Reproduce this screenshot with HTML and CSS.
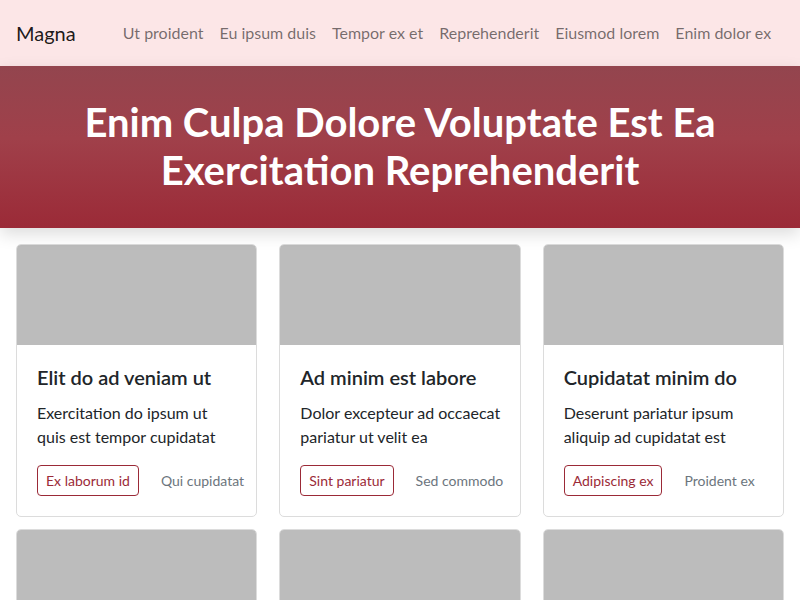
FILE: index.html
```html
<!DOCTYPE html>
<html lang="en">
<head>
<meta charset="utf-8">
<title>Magna</title>
<link rel="stylesheet" href="styles.css">
</head>
<body>
<nav class="navbar">
  <a class="brand" href="#">Magna</a>
  <ul class="nav-links">
    <li><a href="#">Ut proident</a></li>
    <li><a href="#">Eu ipsum duis</a></li>
    <li><a href="#">Tempor ex et</a></li>
    <li><a href="#">Reprehenderit</a></li>
    <li><a href="#">Eiusmod lorem</a></li>
    <li><a href="#">Enim dolor ex</a></li>
  </ul>
</nav>
<header class="hero">
  <h1 class="hero-title">Enim Culpa Dolore Voluptate Est Ea<br>Exercitation Reprehenderit</h1>
</header>
<main class="cards">
  <article class="card">
    <div class="card-img"></div>
    <div class="card-body">
      <h5 class="card-title">Elit do ad veniam ut</h5>
      <p class="card-text">Exercitation do ipsum ut<br>quis est tempor cupidatat</p>
      <div class="card-actions">
        <a class="btn-outline" href="#">Ex laborum id</a>
        <a class="btn-link" href="#">Qui cupidatat</a>
      </div>
    </div>
  </article>
  <article class="card">
    <div class="card-img"></div>
    <div class="card-body">
      <h5 class="card-title">Ad minim est labore</h5>
      <p class="card-text">Dolor excepteur ad occaecat<br>pariatur ut velit ea</p>
      <div class="card-actions">
        <a class="btn-outline" href="#">Sint pariatur</a>
        <a class="btn-link" href="#">Sed commodo</a>
      </div>
    </div>
  </article>
  <article class="card">
    <div class="card-img"></div>
    <div class="card-body">
      <h5 class="card-title">Cupidatat minim do</h5>
      <p class="card-text">Deserunt pariatur ipsum<br>aliquip ad cupidatat est</p>
      <div class="card-actions">
        <a class="btn-outline" href="#">Adipiscing ex</a>
        <a class="btn-link" href="#">Proident ex</a>
      </div>
    </div>
  </article>
  <article class="card">
    <div class="card-img"></div>
  </article>
  <article class="card">
    <div class="card-img"></div>
  </article>
  <article class="card">
    <div class="card-img"></div>
  </article>
</main>
</body>
</html>
```

FILE: styles.css
```css
* { box-sizing: border-box; }

html, body {
  margin: 0;
  padding: 0;
}

body {
  font-family: Lato, "Open Sans", sans-serif;
  font-size: 16px;
  line-height: 1.5;
  color: #212529;
  background: #ffffff;
}

a { text-decoration: none; }

.navbar {
  height: 66px;
  background: #fce6e7;
  display: flex;
  align-items: center;
  padding: 0 16px;
  white-space: nowrap;
}

.brand {
  font-size: 20px;
  color: rgba(0, 0, 0, 0.9);
  margin-right: 39px;
  line-height: 30px;
}

.nav-links {
  list-style: none;
  display: flex;
  margin: 0;
  padding: 0;
}

.nav-links a {
  display: block;
  padding: 8px 8px;
  color: rgba(0, 0, 0, 0.55);
  font-size: 16px;
}

.hero {
  background: linear-gradient(180deg, #93454e 0%, #a0404a 45%, #9b2a37 100%);
  padding: 32px 16px 34px;
  text-align: center;
  box-shadow: 0 6px 16px rgba(0, 0, 0, 0.14);
  position: relative;
}

.hero-title {
  margin: 0;
  color: #ffffff;
  font-size: 40px;
  line-height: 48px;
  font-weight: 700;
}

.cards {
  display: grid;
  grid-template-columns: repeat(3, 1fr);
  column-gap: 22px;
  row-gap: 12px;
  padding: 16px 16px 16px;
}

.card {
  border: 1px solid #dcdcdc;
  border-radius: 5px;
  overflow: hidden;
  background: #fff;
}

.card-img {
  height: 100px;
  background: #bcbcbc;
}

.card-body {
  padding: 20px;
}

.card-title {
  margin: 0 0 12px;
  font-size: 20px;
  line-height: 24px;
  font-weight: 600;
  white-space: nowrap;
}

.card-text {
  margin: 0 0 16px;
  white-space: nowrap;
}

.card-actions {
  display: flex;
  align-items: center;
  white-space: nowrap;
}

.btn-outline {
  display: inline-block;
  font-size: 14px;
  line-height: 21px;
  padding: 4px 8px;
  border: 1px solid #9b2a37;
  border-radius: 4px;
  color: #9b2a37;
}

.btn-link {
  font-size: 14px;
  line-height: 21px;
  padding: 4px 8px;
  margin-left: 14px;
  color: #6c757d;
}
```
